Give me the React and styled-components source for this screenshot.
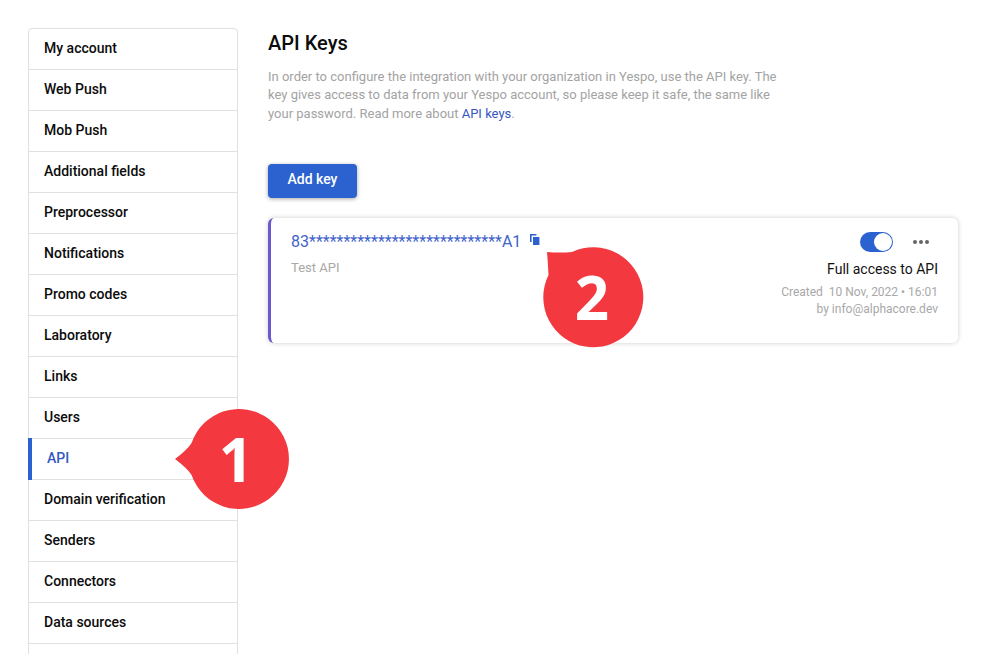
import React from "react";
import styled, { createGlobalStyle } from "styled-components";

const GlobalStyle = createGlobalStyle`
  html, body {
    margin: 0;
    padding: 0;
    height: 100%;
    overflow: hidden;
    background: #fff;
    font-family: Roboto, "Liberation Sans", sans-serif;
  }
  * { box-sizing: border-box; }
`;

const Page = styled.div`
  position: relative;
  width: 987px;
  height: 654px;
  overflow: hidden;
  display: flex;
  align-items: flex-start;
  gap: 30px;
  padding: 28px 0 0 28px;
`;

const Sidebar = styled.nav`
  width: 210px;
  flex: none;
  border: 1px solid #e0e0e0;
  border-radius: 4px 4px 0 0;
`;

const MenuItem = styled.div`
  height: 41px;
  line-height: 39px;
  padding-left: 15px;
  font-size: 14px;
  font-weight: 500;
  color: ${(p) => (p.$active ? "#3558c0" : "#0c0c0c")};
  border-bottom: 1px solid #e0e0e0;
  position: relative;
  ${(p) =>
    p.$active &&
    `
    padding-left: 18px;
    &::before {
      content: "";
      position: absolute;
      left: -1px;
      top: -1px;
      bottom: -1px;
      width: 4px;
      background: #2b62cf;
    }
  `}
`;

const Content = styled.main`
  width: 690px;
  flex: none;
`;

const Title = styled.h1`
  margin: 3px 0 0;
  font-size: 20px;
  line-height: 24px;
  font-weight: 500;
  color: #0c0c0c;
`;

const Intro = styled.p`
  margin: 12.5px 0 0;
  width: 520px;
  font-size: 13px;
  line-height: 18.5px;
  color: #a3a3a3;
`;

const TextLink = styled.a`
  color: #3558c0;
  text-decoration: none;
`;

const PrimaryButton = styled.button`
  display: block;
  margin-top: 40.5px;
  width: 89px;
  height: 34px;
  border: 0;
  border-radius: 4px;
  background: #2b62cf;
  color: #fff;
  font-family: inherit;
  font-size: 14px;
  font-weight: 500;
  box-shadow: 0 1px 4px rgba(0, 0, 0, 0.35);
  padding: 0 0 4px;
`;

const KeyCard = styled.section`
  margin-top: 20px;
  height: 125px;
  display: flex;
  justify-content: space-between;
  padding: 14px 20px 0 20px;
  background: #fff;
  border-left: 3px solid #6a5acd;
  border-radius: 6px;
  box-shadow: 0 0 5px rgba(0, 0, 0, 0.2);
`;

const KeyInfo = styled.div`
  display: flex;
  flex-direction: column;
`;

const KeyRow = styled.div`
  display: flex;
  align-items: flex-start;
  gap: 9px;
  height: 20px;
`;

const KeyValue = styled.span`
  font-size: 16px;
  line-height: 20px;
  color: #3f63c9;
`;

const KeyName = styled.span`
  margin-top: 7px;
  font-size: 13px;
  line-height: 18px;
  color: #a8a8a8;
`;

const KeyMeta = styled.div`
  display: flex;
  flex-direction: column;
  align-items: flex-end;
`;

const Controls = styled.div`
  display: flex;
  align-items: center;
  gap: 20px;
  height: 20px;
  margin-right: 9px;
`;

const Toggle = styled.span`
  display: block;
  width: 33px;
  height: 20px;
  border-radius: 10px;
  background: #2b62cf;
  position: relative;
  &::after {
    content: "";
    position: absolute;
    top: 1px;
    right: 1px;
    width: 18px;
    height: 18px;
    border-radius: 50%;
    background: #fff;
  }
`;

const Dots = styled.span`
  display: flex;
  gap: 2px;
  i {
    display: block;
    width: 4px;
    height: 4px;
    border-radius: 50%;
    background: #666;
  }
`;

const Access = styled.div`
  margin-top: 7px;
  font-size: 14px;
  line-height: 20px;
  color: #111;
`;

const Small = styled.div`
  font-size: 12px;
  line-height: 17px;
  color: #a8a8a8;
  white-space: pre;
`;

const Created = styled(Small)`
  margin-top: 5px;
`;

const Callout = styled.svg`
  position: absolute;
  left: ${(p) => p.$x}px;
  top: ${(p) => p.$y}px;
`;

const CalloutNumber = styled.text`
  font-family: "Open Sans", Inter, sans-serif;
  font-size: 60px;
  font-weight: 700;
  fill: #fff;
  text-anchor: middle;
`;

const CopyIcon = () => (
  <svg width="10" height="11" viewBox="0 0 10 11" style={{ marginTop: 2 }}>
    <path d="M0 0h6.4v1.6H1.6V8H0z" fill="#2b62cf" />
    <rect x="3" y="3" width="6.4" height="8" fill="#2b62cf" />
  </svg>
);

const items = [
  "My account",
  "Web Push",
  "Mob Push",
  "Additional fields",
  "Preprocessor",
  "Notifications",
  "Promo codes",
  "Laboratory",
  "Links",
  "Users",
  "API",
  "Domain verification",
  "Senders",
  "Connectors",
  "Data sources",
];

const App = () => {
  return (
    <Page>
      <GlobalStyle />
      <Sidebar>
        {items.map((item) => (
          <MenuItem key={item} $active={item === "API"}>
            {item}
          </MenuItem>
        ))}
        <MenuItem />
      </Sidebar>

      <Content>
        <Title>API Keys</Title>
        <Intro>
          In order to configure the integration with your organization in Yespo, use the API key. The
          key gives access to data from your Yespo account, so please keep it safe, the same like
          your password. Read more about <TextLink href="#">API keys</TextLink>.
        </Intro>
        <PrimaryButton>Add key</PrimaryButton>

        <KeyCard>
          <KeyInfo>
            <KeyRow>
              <KeyValue>83****************************A1</KeyValue>
              <CopyIcon />
            </KeyRow>
            <KeyName>Test API</KeyName>
          </KeyInfo>
          <KeyMeta>
            <Controls>
              <Toggle />
              <Dots>
                <i />
                <i />
                <i />
              </Dots>
            </Controls>
            <Access>Full access to API</Access>
            <Created>Created  10 Nov, 2022 • 16:01</Created>
            <Small>by info@alphacore.dev</Small>
          </KeyMeta>
        </KeyCard>
      </Content>

      <Callout $x={170} $y={404} width="125" height="110" viewBox="0 0 125 110">
        <path d="M5 55 Q17 46 21.6 39 A50 50 0 1 1 21.6 71 Q17 64 5 55 Z" fill="#f3383f" />
        <CalloutNumber x="66" y="78">1</CalloutNumber>
      </Callout>
      <Callout $x={540} $y={244} width="110" height="110" viewBox="0 0 110 110">
        <path d="M7 8 Q20 9 32 8 A50 50 0 1 1 8.5 31 Q8 20 7 8 Z" fill="#f3383f" />
        <CalloutNumber x="52" y="76">2</CalloutNumber>
      </Callout>
    </Page>
  );
};

export default App;
